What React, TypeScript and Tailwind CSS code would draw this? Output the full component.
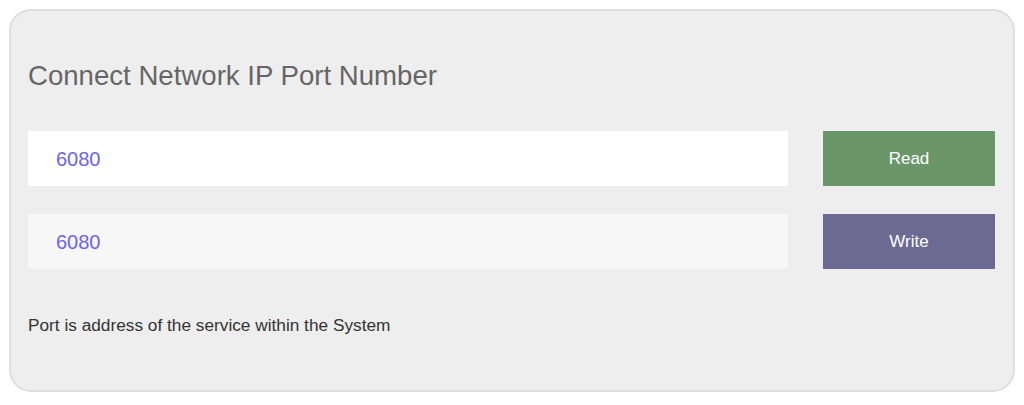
export default function App() {
  const rows = [
    { value: '6080', field: 'bg-white', label: 'Read', button: 'bg-[#6a966a]' },
    { value: '6080', field: 'bg-[#f7f7f7]', label: 'Write', button: 'bg-[#6c6a93]' },
  ];

  return (
    <div className="w-[1024px] h-[405px] bg-white p-[9px] font-['Liberation_Sans',Arial,sans-serif]">
      <div className="w-[1006px] h-[383px] rounded-[22px] border-2 border-[#dedede] bg-[#eeeeee] px-[17px]">
        <h1 className="mt-[49px] text-[27.6px] leading-[32px] text-[#666666]">
          Connect Network IP Port Number
        </h1>

        <div className="mt-[39px] flex flex-col gap-[28px]">
          {rows.map((row) => (
            <div key={row.label} className="flex items-center gap-[35px]">
              <div className={`w-[760px] h-[55px] ${row.field} flex items-center pl-[28px] text-[20px] text-[#6d63f0]`}>
                {row.value}
              </div>
              <button className={`w-[172px] h-[55px] ${row.button} text-white text-[17px]`}>
                {row.label}
              </button>
            </div>
          ))}
        </div>

        <p className="mt-[46px] text-[17.25px] leading-[20px] text-[#333333]">
          Port is address of the service within the System
        </p>
      </div>
    </div>
  );
}
